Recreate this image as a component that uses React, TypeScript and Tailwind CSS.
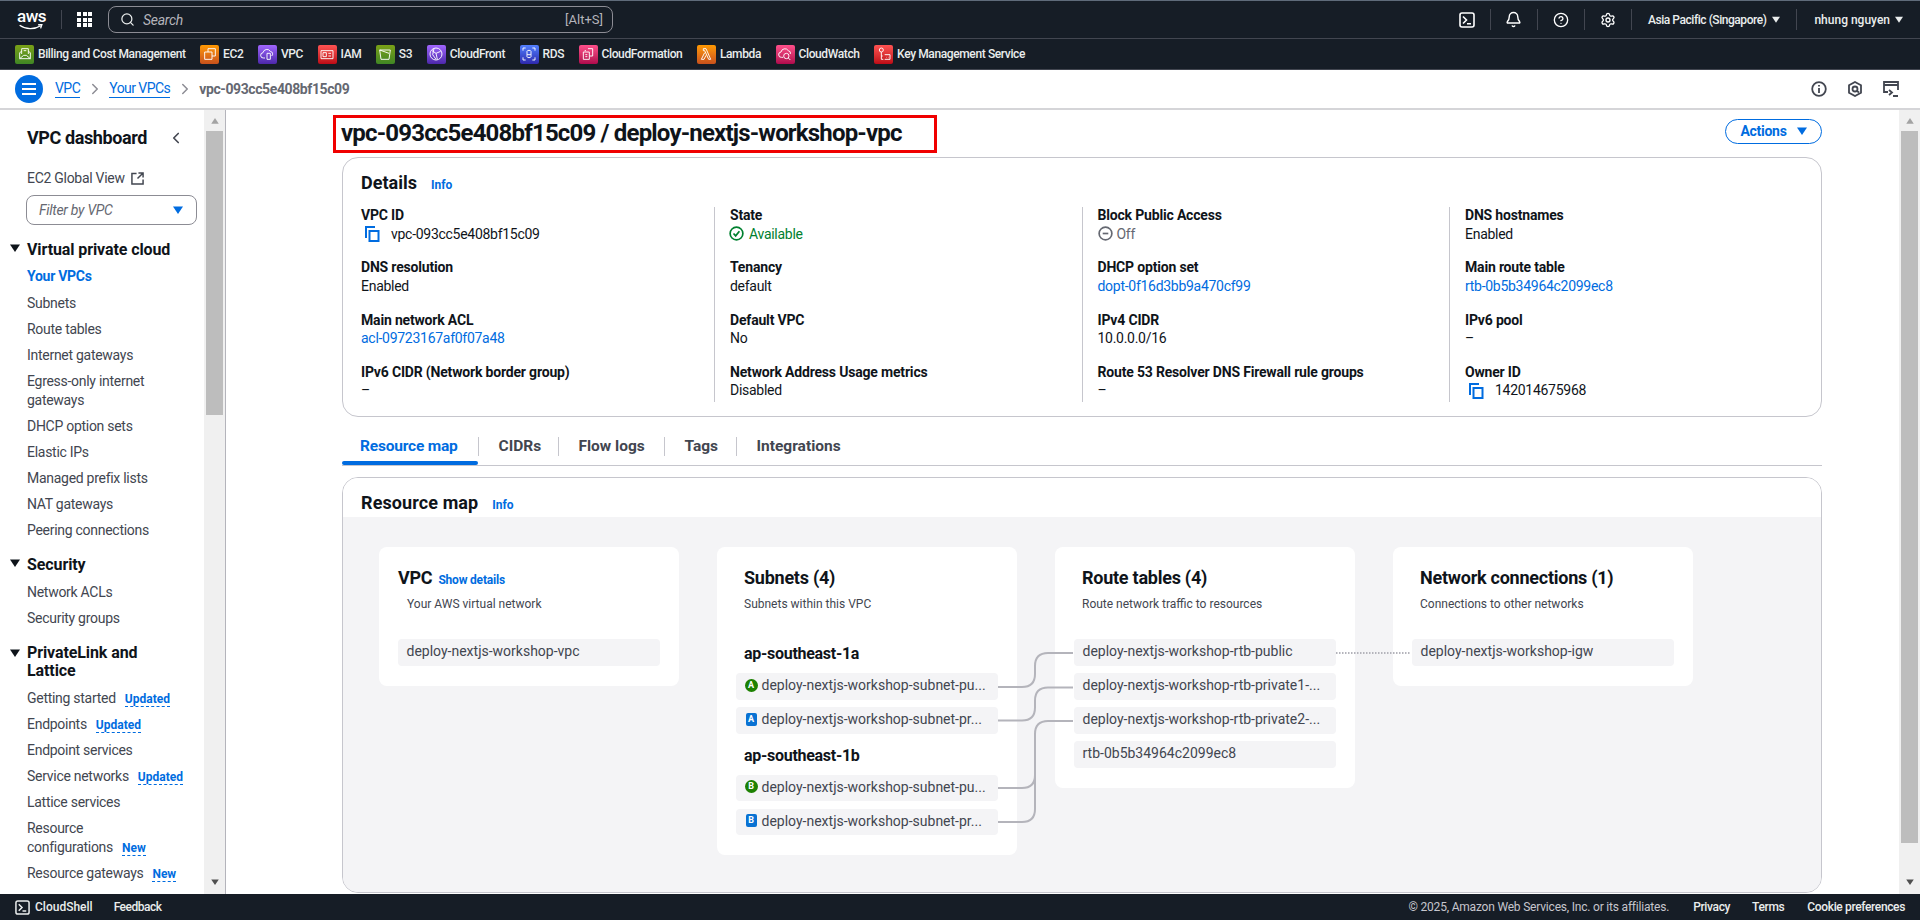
import type { ReactNode } from 'react'
import { Bell, ChevronLeft, ChevronRight, CircleHelp, Search, Settings } from 'lucide-react'

const Caret = ({ className = '' }: { className?: string }) => (
  <svg viewBox="0 0 10 8" className={className} fill="currentColor">
    <path d="M0 0.5h10L5 8z" />
  </svg>
)

const TerminalIcon = ({ className = '' }: { className?: string }) => (
  <svg viewBox="0 0 16 16" className={className} fill="none" stroke="currentColor" strokeWidth="1.6">
    <rect x="1" y="1" width="14" height="14" rx="2" />
    <path d="M4 4.5 7.5 8 4 11.5M8 11.8h4" />
  </svg>
)

const CopyIcon = () => (
  <svg viewBox="0 0 16 16" className="h-4 w-4 shrink-0 text-[#006ce0]" fill="none" stroke="currentColor" strokeWidth="2">
    <path d="M2 12V1h9" />
    <rect x="5.5" y="5" width="9" height="10" />
  </svg>
)

const services: { name: string; bg: string; icon: ReactNode }[] = [
  {
    name: 'Billing and Cost Management',
    bg: 'from-[#3f8624] to-[#7aa116]',
    icon: <path d="M4 10v9h16v-9l-3-2M4 10l3-2M4 19l6-5h4l6 5M7 12V4h10v8M10 7h4" />,
  },
  {
    name: 'EC2',
    bg: 'from-[#c8511b] to-[#ff9900]',
    icon: <path d="M9 9V4h11v11h-5M4 9h11v11H4z" />,
  },
  {
    name: 'VPC',
    bg: 'from-[#4d27aa] to-[#a166ff]',
    icon: <path d="M9 18H7a4 4 0 0 1-1-8 6 6 0 0 1 11-2 4 4 0 0 1 2 7M12 11h5v9h-5z" />,
  },
  {
    name: 'IAM',
    bg: 'from-[#bd0816] to-[#ff5252]',
    icon: <path d="M3 7h18v12H3zM6 10h5v6H6zM14 11h4M14 15h4" />,
  },
  {
    name: 'S3',
    bg: 'from-[#3f8624] to-[#7aa116]',
    icon: <path d="M4 6h16l-2 14H6zM4 6l14 5" />,
  },
  {
    name: 'CloudFront',
    bg: 'from-[#4d27aa] to-[#a166ff]',
    icon: <path d="M12 3a9 9 0 1 0 0 18 9 9 0 0 0 0-18M6 7l6 4 2 9M12 11l7-3M9 3.500 7 13l5 7" />,
  },
  {
    name: 'RDS',
    bg: 'from-[#2e27ad] to-[#527fff]',
    icon: <path d="M9 8c0-2 6-2 6 0v8c0 2-6 2-6 0zM9 12c0 1.500 6 1.500 6 0M3 7V3h4M21 7V3h-4M3 17v4h4M21 17v4h-4" />,
  },
  {
    name: 'CloudFormation',
    bg: 'from-[#b0084d] to-[#ff4f8b]',
    icon: <path d="M12 4h7v11h-5M5 9h9v11H5zM8 13h3M8 16h3M9 7H7" />,
  },
  {
    name: 'Lambda',
    bg: 'from-[#c8511b] to-[#ff9900]',
    icon: <path d="M8 4h4l7 16h-3L10 7H8zM10 10 5 20h4l3-6" />,
  },
  {
    name: 'CloudWatch',
    bg: 'from-[#b0084d] to-[#ff4f8b]',
    icon: <path d="M9 17H7a4 4 0 0 1-1-8 6 6 0 0 1 11-2 4 4 0 0 1 3 5M14 11a4 4 0 1 0 0 8 4 4 0 0 0 0-8M17 18l3 3" />,
  },
  {
    name: 'Key Management Service',
    bg: 'from-[#bd0816] to-[#ff5252]',
    icon: <path d="M8 3a3 3 0 1 0 0 6 3 3 0 0 0 0-6M8 9v11h3M8 15h2M13 13h8v7h-8M16 17h.5M18.500 17h.5" />,
  },
]

const NavItem = ({ children, badge }: { children: ReactNode; badge?: string }) => (
  <li className="py-[3.5px] pl-[27px] pr-[6px] text-sm leading-[19px] text-[#424650]">
    {children}
    {badge && (
      <span className="ml-[9px] border-b border-dashed border-[#006ce0] text-xs font-bold tracking-normal text-[#006ce0]">{badge}</span>
    )}
  </li>
)

const NavHeading = ({ children, className = '' }: { children: ReactNode; className?: string }) => (
  <div className={`flex items-start gap-[7px] pl-[10px] pr-2 text-base font-bold leading-[18px] tracking-[-0.1px] text-[#0f141a] ${className}`}>
    <Caret className="mt-[5px] h-2 w-[10px] shrink-0" />
    <span>{children}</span>
  </div>
)

const Sidebar = () => (
  <aside className="flex w-[226px] shrink-0 border-r border-[#b4b4bb]">
    <div className="w-[204px] overflow-hidden">
      <div className="flex items-center justify-between pl-[27px] pr-[19px] pt-[17px] text-lg font-bold leading-[22px] tracking-[-0.4px] text-[#0f141a]">
        VPC dashboard
        <ChevronLeft className="h-[18px] w-[18px] text-[#424650]" strokeWidth={2.2} />
      </div>
      <div className="mt-[20px] flex items-center gap-[6px] pl-[27px] text-sm leading-[19px] text-[#424650]">
        EC2 Global View
        <svg viewBox="0 0 14 14" className="h-[13px] w-[13px]" fill="none" stroke="#424650" strokeWidth="1.6">
          <path d="M6 1.500H1v11.500h12V8M8 1h5v5M13 1 7 7" />
        </svg>
      </div>
      <div className="ml-[26px] mt-[7px] flex h-[30px] w-[171px] items-center justify-between rounded-lg border border-[#8c8c94] pl-3 pr-[13px] text-sm italic text-[#656871]">
        Filter by VPC
        <Caret className="h-2 w-[10px] text-[#006ce0]" />
      </div>
      <NavHeading className="mt-[14px] mb-[3px] !leading-[22px]">Virtual private cloud</NavHeading>
      <ul>
        <li className="pb-[4.5px] pl-[27px] pt-[2.5px] text-sm font-bold leading-[19px] text-[#006ce0]">Your VPCs</li>
        <NavItem>Subnets</NavItem>
        <NavItem>Route tables</NavItem>
        <NavItem>Internet gateways</NavItem>
        <NavItem>Egress-only internet gateways</NavItem>
        <NavItem>DHCP option sets</NavItem>
        <NavItem>Elastic IPs</NavItem>
        <NavItem>Managed prefix lists</NavItem>
        <NavItem>NAT gateways</NavItem>
        <NavItem>Peering connections</NavItem>
      </ul>
      <NavHeading className="mt-[11px] mb-[3px] !leading-[22px]">Security</NavHeading>
      <ul>
        <NavItem>Network ACLs</NavItem>
        <NavItem>Security groups</NavItem>
      </ul>
      <NavHeading className="mt-[13px] mb-[5px]">
        PrivateLink and
        <br />
        Lattice
      </NavHeading>
      <ul>
        <NavItem badge="Updated">Getting started</NavItem>
        <NavItem badge="Updated">Endpoints</NavItem>
        <NavItem>Endpoint services</NavItem>
        <NavItem badge="Updated">Service networks</NavItem>
        <NavItem>Lattice services</NavItem>
        <NavItem badge="New">
          Resource
          <br />
          configurations
        </NavItem>
        <NavItem badge="New">Resource gateways</NavItem>
      </ul>
    </div>
    <Scrollbar thumb="h-[284px]" />
  </aside>
)

const Scrollbar = ({ thumb }: { thumb: string }) => (
  <div className="flex w-[21px] shrink-0 flex-col items-center bg-[#f0f0f0] pt-[8px]">
    <Caret className="h-[6px] w-[10px] rotate-180 text-[#a3a3a3]" />
    <div className={`mt-[7px] w-[17px] bg-[#bdbdbd] ${thumb}`} />
    <Caret className="mt-auto mb-[9px] h-[6px] w-[10px] text-[#505050]" />
  </div>
)

const Field = ({ label, children }: { label: string; children: ReactNode }) => (
  <div className="h-[52.33px] -translate-y-px text-sm leading-[18.500px] text-[#0f141a] last:h-auto">
    <div className="font-bold tracking-[-0.18px]">{label}</div>
    <div className="flex items-center">{children}</div>
  </div>
)

const DetailLink = ({ children }: { children: ReactNode }) => <span className="text-[#006ce0]">{children}</span>

const Column = ({ children, first }: { children: ReactNode; first?: boolean }) => (
  <div className={`flex h-[195px] flex-col ${first ? '' : 'border-l border-[#c6c6cd] pl-[15px]'}`}>{children}</div>
)

const Details = () => (
  <section className="mt-1 h-[260px] rounded-2xl border border-[#c6c6cd] pl-[18px] pt-[14px]">
    <div className="flex items-baseline gap-[14px]">
      <h2 className="text-lg font-bold leading-[22px] tracking-normal text-[#0f141a]">Details</h2>
      <span className="text-xs font-bold tracking-normal text-[#006ce0]">Info</span>
    </div>
    <div className="mt-[13px] grid grid-cols-[353px_367.500px_367.500px_1fr]">
      <Column first>
        <Field label="VPC ID">
          <span className="ml-[3px] mr-[11px]"><CopyIcon /></span>vpc-093cc5e408bf15c09
        </Field>
        <Field label="DNS resolution">Enabled</Field>
        <Field label="Main network ACL"><DetailLink>acl-09723167af0f07a48</DetailLink></Field>
        <Field label="IPv6 CIDR (Network border group)">–</Field>
      </Column>
      <Column>
        <Field label="State">
          <span className="flex items-center gap-[5px] text-[#00802f]">
            <svg viewBox="0 0 16 16" className="-ml-px h-[15px] w-[15px]" fill="none" stroke="currentColor" strokeWidth="1.800">
              <circle cx="8" cy="8" r="6.800" />
              <path d="m4.800 8 2.300 2.500 4-5" />
            </svg>
            Available
          </span>
        </Field>
        <Field label="Tenancy">default</Field>
        <Field label="Default VPC">No</Field>
        <Field label="Network Address Usage metrics">Disabled</Field>
      </Column>
      <Column>
        <Field label="Block Public Access">
          <span className="flex items-center gap-[4px] text-[#656871]">
            <svg viewBox="0 0 16 16" className="h-[15px] w-[15px]" fill="none" stroke="currentColor" strokeWidth="1.800">
              <circle cx="8" cy="8" r="6.800" />
              <path d="M5 8h6" />
            </svg>
            Off
          </span>
        </Field>
        <Field label="DHCP option set"><DetailLink>dopt-0f16d3bb9a470cf99</DetailLink></Field>
        <Field label="IPv4 CIDR">10.0.0.0/16</Field>
        <Field label="Route 53 Resolver DNS Firewall rule groups">–</Field>
      </Column>
      <Column>
        <Field label="DNS hostnames">Enabled</Field>
        <Field label="Main route table"><DetailLink>rtb-0b5b34964c2099ec8</DetailLink></Field>
        <Field label="IPv6 pool">–</Field>
        <Field label="Owner ID">
          <span className="ml-[3px] mr-[11px]"><CopyIcon /></span>142014675968
        </Field>
      </Column>
    </div>
  </section>
)

const tabs = [
  { name: 'Resource map', width: 'w-[136.500px]' },
  { name: 'CIDRs', width: 'w-[80px]' },
  { name: 'Flow logs', width: 'w-[106px]' },
  { name: 'Tags', width: 'w-[72px]' },
  { name: 'Integrations', width: 'w-[130px]' },
]

const Tabs = () => (
  <div className="mt-5 flex h-[29px] items-start border-b border-[#c6c6cd]">
    {tabs.map((t, i) => (
      <div
        key={t.name}
        className={`relative flex h-[19px] items-center text-[15.5px] font-bold ${t.width} ${
          i === 0 ? 'pl-[18px] tracking-[-0.2px] text-[#006ce0]' : 'pl-[20px] tracking-normal text-[#424650]'
        } ${i < 4 ? 'border-r border-[#c6c6cd]' : ''}`}
      >
        {t.name}
        {i === 0 && <span className="absolute left-0 right-0 top-[24px] h-1 rounded-sm bg-[#006ce0]" />}
      </div>
    ))}
  </div>
)

const MapItem = ({ children, className = '' }: { children: ReactNode; className?: string }) => (
  <div className={`flex h-[26.500px] items-center rounded-sm bg-[#f4f4f6] pb-[2px] pl-[8.500px] text-sm tracking-normal text-[#424650] ${className}`}>
    {children}
  </div>
)

const MapCard = ({
  title,
  desc,
  children,
  extra,
  descClass = 'pl-[8px]',
  titleClass = 'pl-[8px]',
}: {
  title: string
  desc: string
  children: ReactNode
  extra?: ReactNode
  descClass?: string
  titleClass?: string
}) => (
  <div className="w-[300px] shrink-0 rounded-lg bg-white px-[19px] pb-[20px] pt-[20px]">
    <div className={`flex items-baseline gap-[6px] ${titleClass}`}>
      <h3 className="text-lg font-bold leading-[22px] tracking-[-0.25px] text-[#0f141a]">{title}</h3>
      {extra}
    </div>
    <p className={`mt-[7px] text-xs leading-4 tracking-normal text-[#424650] ${descClass}`}>{desc}</p>
    {children}
  </div>
)

const Az = ({ letter, kind }: { letter: string; kind: 'public' | 'private' }) => (
  <span
    className={`flex h-[13px] shrink-0 items-center justify-center text-[9px] font-bold tracking-normal text-white ${
      kind === 'public' ? 'mr-[4px] w-[13px] rounded-full bg-[#1d8102]' : 'ml-[1px] mr-[5px] w-[11px] rounded-[2px] bg-[#0972d3]'
    }`}
  >
    {letter}
  </span>
)

const Region = ({ name, className }: { name: string; className: string }) => (
  <div className={`pl-[8px] text-base font-bold leading-5 text-[#0f141a] ${className}`}>{name}</div>
)

const ResourceMap = () => (
  <section className="mt-[11px] h-[416px] overflow-hidden rounded-2xl border border-[#c6c6cd]">
    <div className="flex h-[39px] items-baseline gap-[14px] bg-white pl-[18px] pt-[14px]">
      <h2 className="text-lg font-bold leading-[22px] tracking-[0.1px] text-[#0f141a]">Resource map</h2>
      <span className="text-xs font-bold tracking-normal text-[#006ce0]">Info</span>
    </div>
    <div className="relative flex h-[376px] items-start gap-[38px] bg-[#f4f4f6] pl-[36px] pt-[30px]">
      <MapCard
        title="VPC"
        desc="Your AWS virtual network"
        titleClass="pl-0"
        descClass="pl-[9px]"
        extra={<span className="text-xs font-bold tracking-[-0.2px] text-[#006ce0]">Show details</span>}
      >
        <MapItem className="mt-[27px]">deploy-nextjs-workshop-vpc</MapItem>
      </MapCard>
      <MapCard title="Subnets (4)" desc="Subnets within this VPC">
        <Region name="ap-southeast-1a" className="mt-[32px]" />
        <MapItem className="mt-[9px]"><Az letter="A" kind="public" />deploy-nextjs-workshop-subnet-pu...</MapItem>
        <MapItem className="mt-[7.500px]"><Az letter="A" kind="private" />deploy-nextjs-workshop-subnet-pr...</MapItem>
        <Region name="ap-southeast-1b" className="mt-[12px]" />
        <MapItem className="mt-[9px]"><Az letter="B" kind="public" />deploy-nextjs-workshop-subnet-pu...</MapItem>
        <MapItem className="mt-[7.500px]"><Az letter="B" kind="private" />deploy-nextjs-workshop-subnet-pr...</MapItem>
      </MapCard>
      <MapCard title="Route tables (4)" desc="Route network traffic to resources">
        <MapItem className="mt-[27px]">deploy-nextjs-workshop-rtb-public</MapItem>
        <MapItem className="mt-[7.500px]">deploy-nextjs-workshop-rtb-private1-...</MapItem>
        <MapItem className="mt-[7.500px]">deploy-nextjs-workshop-rtb-private2-...</MapItem>
        <MapItem className="mt-[7.500px]">rtb-0b5b34964c2099ec8</MapItem>
      </MapCard>
      <MapCard title="Network connections (1)" desc="Connections to other networks">
        <MapItem className="mt-[27px]">deploy-nextjs-workshop-igw</MapItem>
      </MapCard>
      {/* connector lines, page coords shifted by the map's origin */}
      <svg className="pointer-events-none absolute left-0 top-0" width="1478" height="376" fill="none" stroke="#b4b4bb" strokeWidth="2">
        <g transform="translate(-343 -517)">
          <path d="M998 687h24q13 0 13-13v-8q0-13 13-13h25" />
          <path d="M998 720.500h24q13 0 13-13v-7q0-13 13-13h25" />
          <path d="M998 788h24q13 0 13-13v-41q0-13 13-13h25" />
          <path d="M998 822h24q13 0 13-13v-75" />
          <path d="M1336 653h74" strokeDasharray="1.500 1.500" />
        </g>
      </svg>
    </div>
  </section>
)

export default function App() {
  return (
    <div className="flex h-[920px] w-[1920px] flex-col overflow-hidden bg-white tracking-[-0.28px] [font-family:Roboto,sans-serif]">
      <header className="flex h-[39px] shrink-0 items-center border-b border-t border-b-[#424650] border-t-[#5f6b7a] bg-[#161d26] text-xs text-[#eaeded]">
        <div className="relative ml-[17px] h-[20px] w-[28px]">
          <span className="absolute -top-[2px] left-0 text-[17px] font-medium leading-[17px] tracking-[-0.5px] text-white">aws</span>
          <svg viewBox="0 0 28 8" className="absolute bottom-[-1px] left-0 h-[7px] w-[28px]" fill="none" stroke="#fff" strokeWidth="1.500">
            <path d="M1 1.500c7 5 17 5 24 .5M22 1l4.500-.500L25 5" />
          </svg>
        </div>
        <span className="ml-[16px] h-[19px] border-l border-[#424650]" />
        <div className="ml-[15px] grid h-[15px] w-[15px] grid-cols-3 gap-[1.500px]">
          {Array.from({ length: 9 }).map((_, i) => (
            <span key={i} className="bg-white" />
          ))}
        </div>
        <div className="ml-[16px] flex h-[27px] w-[505px] items-center rounded-lg border border-[#8c8c94] pl-[11px] pr-[9px] text-[#b4b4bb]">
          <Search className="h-[15px] w-[15px] text-[#eaeded]" strokeWidth={2} />
          <span className="ml-2 text-sm italic">Search</span>
          <span className="ml-auto text-[13px] tracking-normal">[Alt+S]</span>
        </div>
        <div className="ml-auto flex items-center">
          <TerminalIcon className="h-4 w-4 text-white" />
          <span className="ml-[15px] h-[21px] border-l border-[#424650]" />
          <Bell className="ml-[14px] h-[17px] w-[17px] text-white" strokeWidth={2} />
          <span className="ml-[15px] h-[21px] border-l border-[#424650]" />
          <CircleHelp className="ml-[15px] h-4 w-4 text-white" strokeWidth={2} />
          <span className="ml-[15px] h-[21px] border-l border-[#424650]" />
          <Settings className="ml-[15px] h-4 w-4 text-white" strokeWidth={2} />
          <span className="ml-[15px] h-[21px] border-l border-[#424650]" />
          <span className="ml-[16px] font-medium tracking-[-0.45px]">Asia Pacific (Singapore)</span>
          <Caret className="ml-[6px] h-[7px] w-[8px]" />
          <span className="ml-[16px] h-[21px] border-l border-[#424650]" />
          <span className="ml-[17px] font-medium tracking-normal">nhung nguyen</span>
          <Caret className="ml-[5px] mr-[17px] h-[7px] w-[8px]" />
        </div>
      </header>

      <nav className="flex h-[31px] shrink-0 items-center gap-[14.500px] border-b border-[#424650] bg-[#161d26] pl-[15px] tracking-[-0.38px]">
        {services.map(s => (
          <div key={s.name} className="flex items-center gap-1 text-xs font-medium text-[#eaeded]">
            <span className={`flex h-[19px] w-[19px] items-center justify-center rounded-[2px] bg-linear-to-t ${s.bg}`}>
              <svg viewBox="0 0 24 24" className="h-4 w-4" fill="none" stroke="#fff" strokeWidth="1.400">
                {s.icon}
              </svg>
            </span>
            {s.name}
          </div>
        ))}
      </nav>

      <div className="flex h-[40px] shrink-0 items-center border-b-2 border-[#d5d5d8] bg-white pl-[15px] pr-[21px] tracking-[-0.55px]">
        <span className="flex h-7 w-7 flex-col items-center justify-center gap-[3px] rounded-full bg-[#006ce0]">
          <span className="h-[2px] w-[14px] bg-white" />
          <span className="h-[2px] w-[14px] bg-white" />
          <span className="h-[2px] w-[14px] bg-white" />
        </span>
        <span className="ml-3 border-b border-[#006ce0] text-sm leading-[17px] text-[#006ce0]">VPC</span>
        <ChevronRight className="mx-[5.500px] h-[18px] w-[18px] text-[#8c8c94]" strokeWidth={2} />
        <span className="border-b border-[#006ce0] text-sm leading-[17px] text-[#006ce0]">Your VPCs</span>
        <ChevronRight className="mx-[5.500px] h-[18px] w-[18px] text-[#8c8c94]" strokeWidth={2} />
        <span className="text-sm font-bold tracking-[-0.4px] text-[#656871]">vpc-093cc5e408bf15c09</span>
        <div className="ml-auto flex items-center gap-[20px] text-[#424650]">
          <svg viewBox="0 0 16 16" className="h-4 w-4" fill="none" stroke="currentColor" strokeWidth="1.800">
            <circle cx="8" cy="8" r="6.800" />
            <path d="M8 7v5M8 4v1.500" />
          </svg>
          <svg viewBox="0 0 16 16" className="h-4 w-4" fill="none" stroke="currentColor" strokeWidth="1.800">
            <path d="M8 1 14 4.300v7.400L8 15l-6-3.300V4.300z" />
            <circle cx="8" cy="8" r="2.500" />
            <path d="m10 10 2 1.500" />
          </svg>
          <svg viewBox="0 0 16 16" className="h-4 w-4" fill="none" stroke="currentColor" strokeWidth="1.800">
            <path d="M5 11H1V1h14v8M1 4h14" />
            <path d="m6 9 3 2.500L6 14M10 15h5" />
          </svg>
        </div>
      </div>

      <main className="flex min-h-0 flex-1">
        <Sidebar />
        <div className="w-[1673px] overflow-hidden pl-[116px] pr-[77px]">
          <div className="flex items-start justify-between pt-[5px]">
            <h1 className="-ml-[9px] flex h-[38px] w-[604px] items-center whitespace-nowrap border-[3px] border-[#f00000] pb-[2px] pl-[5px] text-2xl font-bold tracking-[-0.82px] text-[#0f141a]">
              vpc-093cc5e408bf15c09 / deploy-nextjs-workshop-vpc
            </h1>
            <button className="mt-1 flex h-[25px] w-[97px] items-center justify-center gap-[10px] rounded-full border-[1.500px] border-[#006ce0] pb-[1px] text-sm font-bold text-[#006ce0]">
              Actions
              <Caret className="h-2 w-[10px]" />
            </button>
          </div>
          <Details />
          <Tabs />
          <ResourceMap />
        </div>
        <Scrollbar thumb="h-[712px]" />
      </main>

      <footer className="flex h-[26px] shrink-0 items-center bg-[#161d26] pl-[15px] pr-[15px] text-xs font-medium tracking-[-0.36px] text-[#eaeded]">
        <TerminalIcon className="h-[15px] w-[15px]" />
        <span className="ml-[5px] tracking-normal">CloudShell</span>
        <span className="ml-[21px] tracking-[-0.5px]">Feedback</span>
        <span className="ml-auto font-normal tracking-[-0.2px] text-[#c6c6cd]">© 2025, Amazon Web Services, Inc. or its affiliates.</span>
        <span className="ml-[24px]">Privacy</span>
        <span className="ml-[22px]">Terms</span>
        <span className="ml-[23px]">Cookie preferences</span>
      </footer>
    </div>
  )
}
